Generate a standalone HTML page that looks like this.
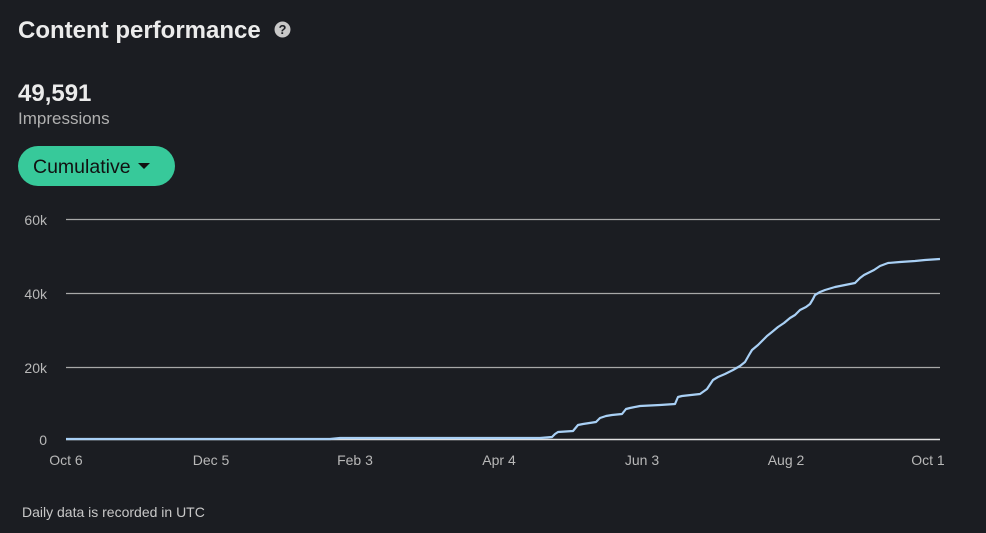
<!DOCTYPE html>
<html><head><meta charset="utf-8"><style>
body{margin:0;width:986px;height:533px;background:#1b1d22;font-family:"Liberation Sans",sans-serif;overflow:hidden;position:relative;color:#e8e8e8}
.t{position:absolute;white-space:nowrap}
</style></head><body>
<div class="t" style="left:18px;top:17px;font-size:24px;font-weight:bold;color:#ebebeb">Content performance</div>
<svg style="position:absolute;left:274px;top:21px" width="17" height="17" viewBox="0 0 16 16"><circle cx="8" cy="8" r="7.5" fill="#c8c8c8"/><text x="8" y="12.3" font-size="12" font-weight="bold" text-anchor="middle" fill="#1b1d22" font-family="Liberation Sans">?</text></svg>
<div class="t" style="left:18px;top:80px;font-size:24px;font-weight:bold;color:#ebebeb">49,591</div>
<div class="t" style="left:18px;top:109px;font-size:17px;color:#b0b0b0">Impressions</div>
<div style="position:absolute;left:18px;top:146px;width:157px;height:40px;border-radius:20px;background:#37c99a"></div>
<div class="t" style="left:33px;top:156px;font-size:19.5px;color:#111">Cumulative</div>
<svg style="position:absolute;left:137px;top:162px" width="14" height="8"><path d="M1 1L13 1L7 7Z" fill="#111"/></svg>
<svg style="position:absolute;left:0;top:0" width="986" height="533">
<g stroke="#a8a8a8" stroke-width="1.3"><line x1="66" y1="219.5" x2="940" y2="219.5"/><line x1="66" y1="293.5" x2="940" y2="293.5"/><line x1="66" y1="367.5" x2="940" y2="367.5"/></g>
<line x1="66" y1="439.5" x2="940" y2="439.5" stroke="#e0e0e0" stroke-width="1.5"/>
<g font-family="Liberation Sans" font-size="14" fill="#b8b8b8"><text x="47" y="225" text-anchor="end">60k</text><text x="47" y="299" text-anchor="end">40k</text><text x="47" y="373" text-anchor="end">20k</text><text x="47" y="445" text-anchor="end">0</text>
<text x="66" y="465" text-anchor="middle">Oct 6</text><text x="211" y="465" text-anchor="middle">Dec 5</text><text x="355" y="465" text-anchor="middle">Feb 3</text><text x="499" y="465" text-anchor="middle">Apr 4</text><text x="642" y="465" text-anchor="middle">Jun 3</text><text x="786" y="465" text-anchor="middle">Aug 2</text><text x="928" y="465" text-anchor="middle">Oct 1</text></g>
<polyline fill="none" stroke="#a9d0f5" stroke-width="2.2" stroke-linejoin="round" points="66,439 330,439 340,438 540,438 552,437 555,434 558,432 573,431 578,425 583,424 596,422 600,418 606,416 612,415 622,414 626,409 630,408 640,406 660,405 675,404 678,397 682,396 700,394 707,389 713,380 718,377 725,374 733,370 740,366 745,362 749,355 752,350 758,345 762,341 767,336 772,332 778,327 784,323 790,318 795,315 800,310 806,307 810,304 813,299 815,295 820,292 825,290 835,287 845,285 855,283 860,278 864,275 868,273 874,270 880,266 888,263 900,262 915,261 925,260 940,259"/>
</svg>
<div class="t" style="left:22px;top:504px;font-size:14px;color:#c8c8c8">Daily data is recorded in UTC</div>
</body></html>
